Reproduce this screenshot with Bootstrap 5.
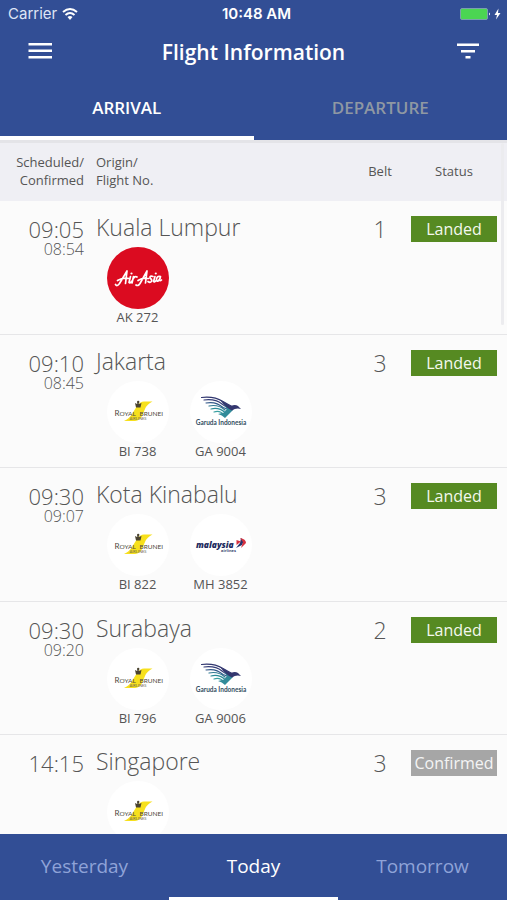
<!DOCTYPE html>
<html lang="en">
<head>
<meta charset="utf-8">
<meta name="viewport" content="width=device-width, initial-scale=1">
<title>Flight Information</title>
<link href="https://cdn.jsdelivr.net/npm/bootstrap@5.3.0/dist/css/bootstrap.min.css" rel="stylesheet">
<style>
  body { font-family: "Open Sans", "Noto Sans", sans-serif; color: #555; background: #fbfbfb; }
  .brand-bg { background: #324e95; color: #fff; }
  .phone-bar { height: 28px; font: 15px/28px Inter, "Liberation Sans", sans-serif; color: #dfe5f5; padding: 0 6px 0 8px; }
  .clock { font-weight: 600; color: #fff; padding-left: 4px; }
  .title-bar { height: 48px; padding: 0 27px; }
  .title-bar h1 { font-size: 21px; line-height: 28px; font-weight: 600; }
  .icon-btn { background: none; border: 0; padding: 0; width: 26px; height: 28px; line-height: 0; color: #fff; }
  .switcher .nav-link { width: 100%; color: #8f98a3; background: none; border: 0 solid transparent; border-bottom-width: 4px; border-radius: 0; padding: 4px 0 0; }
  .switcher .nav-link.active { color: #fff; border-color: #fff; }
  .direction .nav-link { height: 64px; font-size: 17px; line-height: 24px; font-weight: 600; }
  .days .nav-link { height: 66px; font-size: 19px; line-height: 28px; color: #8fa3d8; border-bottom-width: 3px; padding-top: 0; }
  .board { border-top: 3px solid #e4e4e8; scrollbar-width: none; }
  .board::-webkit-scrollbar { display: none; }
  .flights { table-layout: fixed; width: 100%; border-collapse: separate; border-spacing: 0; }
  .col-time { width: 96px; }
  .col-belt { width: 62px; }
  .col-status { width: 96px; }
  .flights th { height: 58px; padding: 0 0 2px; background: #efeff4; font-size: 13px; line-height: 18px; font-weight: 400; vertical-align: middle; }
  .flights td { height: 134px; padding: 15px 0 0; vertical-align: top; border-bottom: 1px solid #e6e6e8; }
  .flights tr:nth-child(even) td { height: 133px; }
  .flights .pad-time { padding-right: 12px; text-align: right; }
  .planned { font-size: 22px; line-height: 26px; font-weight: 300; }
  .belt-no { font-size: 23px; line-height: 26px; font-weight: 300; }
  .actual { font-size: 16px; line-height: 14px; font-weight: 300; }
  .city { font-size: 23px; line-height: 22px; font-weight: 300; }
  .carrier { width: 83px; font-size: 13px; line-height: 16px; padding-top: 9px; }
  .carrier svg { display: block; width: 62px; height: 62px; margin: 0 auto; }
  .flights .pad-status { padding-right: 10px; }
  .state { height: 26px; font-size: 16px; line-height: 26px; color: #f4f8ee; background: #568a22; }
  .state-wait { background: #a6a6a6; color: #f4f4f4; }
  .scroll-thumb { top: 3px; right: 3px; width: 3px; height: 182px; border-radius: 2px; background: #ececef; }
</style>
<script src="https://cdn.jsdelivr.net/npm/bootstrap@5.3.0/dist/js/bootstrap.bundle.min.js"></script>
</head>
<body>
<svg class="d-none" aria-hidden="true">
  <symbol id="airasia" viewBox="0 0 62 62">
    <circle cx="31" cy="31" r="31" fill="#db0b20"/>
    <g fill="none" stroke="#fff" stroke-linecap="round" stroke-linejoin="round" stroke-width="1.7">
      <path d="M8.500 37.500Q10 40 12.500 36.500L20 24L18.500 36.500M10.500 33.500Q16 30 22 31.500"/>
      <path d="M23.500 29.500L22 35.500Q23 36.500 25 34M26.500 29.500L25 36M26 32Q28 28.500 30 30"/>
      <path d="M29 38Q31 39.500 33 36.500L40 24L38.500 36M31 33.500Q36 30 41.500 31.500"/>
      <path d="M46 29.500Q42.500 28.500 43 31Q45.500 33 44.500 34.500Q43 36 41 34.500"/>
      <path d="M48 29.500L46.500 34.500Q47.500 35.500 49.500 33M53.500 29.500Q49.500 28.500 49.500 33Q50.500 36 53 31.500L53.500 29.500L52.500 33Q53 34.500 54.500 33"/>
    </g>
    <circle cx="24.500" cy="26.500" r="1.100" fill="#fff"/><circle cx="48.800" cy="26.500" r="1.100" fill="#fff"/>
  </symbol>
  <symbol id="brunei" viewBox="0 0 62 62">
    <circle cx="31" cy="31" r="31" fill="#fff"/>
    <path d="M45.500 20.500H37Q33 20.500 30 25L25 33Q22 38 17 40H28Q33 39.500 35 35L38 28Q40 23 45.500 20.500Z" fill="#f7e01c"/>
    <path d="M28 22L30 23L31 21L32 23L34.500 22L33.500 26.500H29Z" fill="#4b4430"/>
    <circle cx="31.200" cy="21" r="1.200" fill="#4b4430"/>
    <text x="7.500" y="34.500" font-family="Lato, sans-serif" font-size="6.500" fill="#4f4a40"><tspan font-size="8">R</tspan>OYAL</text>
    <text x="32.500" y="34.500" font-family="Lato, sans-serif" font-size="6.500" fill="#4f4a40">BRUNEI</text>
    <text x="31" y="39" text-anchor="middle" font-family="Lato, sans-serif" font-size="4" fill="#6b6555">AIRLINES</text>
  </symbol>
  <symbol id="garuda" viewBox="0 0 62 62">
    <circle cx="31" cy="31" r="31" fill="#fff"/>
    <g fill="none" stroke-width="1.200" stroke-linecap="round">
      <path d="M11.500 16.500Q24 15 33 20.500Q39 24 43 26" stroke="#30366f"/>
      <path d="M14 19Q25 17.500 32 23Q37 27 42 27" stroke="#353d77"/>
      <path d="M16 22Q26 20 33 26.500L40 29" stroke="#34598a"/>
      <path d="M19 25Q28 23 35 29" stroke="#2e7891"/>
      <path d="M21 28Q29 26 35 31.500" stroke="#2b8b98"/>
      <path d="M24 31Q30 29 34 34" stroke="#3ba0a2"/>
    </g>
    <path d="M34 24L41 27L43 29L35 37Q32 34 28 33L34 31.500L37 28Z" fill="#318b99"/>
    <path d="M30 19L41 25Q45 23 48 25L51 28Q46 26.500 42 29.500Q36 27 30 19Z" fill="#34376f"/>
    <text x="31" y="44" text-anchor="middle" font-family="Lato, sans-serif" font-size="6.500" font-weight="700" fill="#344e62">Garuda Indonesia</text>
  </symbol>
  <symbol id="malaysia" viewBox="0 0 62 62">
    <circle cx="31" cy="31" r="31" fill="#fff"/>
    <text x="6" y="34" font-family="Open Sans, sans-serif" font-size="8.500" font-weight="800" font-style="italic" fill="#1e2c60">malaysia</text>
    <text x="31" y="37.500" font-family="Open Sans, sans-serif" font-size="4" font-weight="700" fill="#40496f">airlines</text>
    <path d="M46 34L50 29L51 24L54 27L52 31Z" fill="#24356f"/>
    <path d="M50 24Q56 25 56 29L51 34L53 28Z" fill="#d5313f"/>
    <path d="M46.500 26L51 27.500L46.500 31Z" fill="#d5313f"/>
  </symbol>
</svg>

<div class="d-flex flex-column vh-100">
  <header class="brand-bg flex-shrink-0">
    <div class="phone-bar d-flex">
      <div class="col d-flex align-items-center gap-1">Carrier
        <svg width="18" height="14" viewBox="0 0 18 14" fill="none" stroke="#fff" stroke-width="2" aria-hidden="true"><path d="M2 5Q9-1 16 5M4.500 8Q9 4 13.500 8"/><path d="M6.500 10Q9 8 11.500 10L9 13Z" fill="#fff" stroke="none"/></svg>
      </div>
      <div class="clock">10:48 AM</div>
      <div class="col d-flex align-items-center justify-content-end">
        <svg width="42" height="14" viewBox="0 0 42 14" aria-hidden="true"><rect x="1.500" y="1.500" width="27" height="11" rx="1.500" fill="#4bd552" stroke="#7a9fae"/><path d="M30 5.500Q32 7 30 8.500Z" fill="#fff"/><path d="M39.500 1.500L35.500 8H38L37 12.500L41.500 6H39Z" fill="#fff"/></svg>
      </div>
    </div>
    <div class="title-bar d-flex align-items-center justify-content-between">
      <button class="icon-btn" type="button" aria-label="Menu"><svg width="26" height="28" viewBox="0 0 26 28" fill="currentColor" aria-hidden="true"><path d="M1.500 5h23.500v2.500H1.500zM1.500 11.500h23.500v2.500H1.500zM1.500 18h23.500v2.500H1.500z"/></svg></button>
      <h1 class="m-0">Flight Information</h1>
      <button class="icon-btn" type="button" aria-label="Filter"><svg width="26" height="28" viewBox="0 0 26 28" fill="currentColor" aria-hidden="true"><path d="M3 5.500h22v2.500H3zM7 12h14v2.500H7zM11.500 18h5v2.500h-5z"/></svg></button>
    </div>
    <nav class="switcher direction row g-0">
      <div class="col"><button class="nav-link active" type="button">ARRIVAL</button></div>
      <div class="col"><button class="nav-link" type="button">DEPARTURE</button></div>
    </nav>
  </header>

  <div class="position-relative flex-grow-1 overflow-hidden">
  <main class="board h-100 overflow-auto">
    <table class="flights">
      <colgroup><col class="col-time"><col><col class="col-belt"><col class="col-status"></colgroup>
      <thead>
        <tr><th class="pad-time" scope="col">Scheduled/<br>Confirmed</th><th scope="col">Origin/<br>Flight No.</th><th class="text-center" scope="col">Belt</th><th class="text-center pad-status" scope="col">Status</th></tr>
      </thead>
      <tbody>
        <tr>
          <td class="pad-time"><div class="planned">09:05</div><div class="actual">08:54</div></td>
          <td><div class="city">Kuala Lumpur</div><div class="d-flex text-center"><div class="carrier"><svg role="img" aria-label="AirAsia"><use href="#airasia"/></svg>AK 272</div></div></td>
          <td class="text-center belt-no">1</td>
          <td class="text-center pad-status"><div class="state">Landed</div></td>
        </tr>
        <tr>
          <td class="pad-time"><div class="planned">09:10</div><div class="actual">08:45</div></td>
          <td><div class="city">Jakarta</div><div class="d-flex text-center"><div class="carrier"><svg role="img" aria-label="Royal Brunei"><use href="#brunei"/></svg>BI 738</div><div class="carrier"><svg role="img" aria-label="Garuda Indonesia"><use href="#garuda"/></svg>GA 9004</div></div></td>
          <td class="text-center belt-no">3</td>
          <td class="text-center pad-status"><div class="state">Landed</div></td>
        </tr>
        <tr>
          <td class="pad-time"><div class="planned">09:30</div><div class="actual">09:07</div></td>
          <td><div class="city">Kota Kinabalu</div><div class="d-flex text-center"><div class="carrier"><svg role="img" aria-label="Royal Brunei"><use href="#brunei"/></svg>BI 822</div><div class="carrier"><svg role="img" aria-label="Malaysia Airlines"><use href="#malaysia"/></svg>MH 3852</div></div></td>
          <td class="text-center belt-no">3</td>
          <td class="text-center pad-status"><div class="state">Landed</div></td>
        </tr>
        <tr>
          <td class="pad-time"><div class="planned">09:30</div><div class="actual">09:20</div></td>
          <td><div class="city">Surabaya</div><div class="d-flex text-center"><div class="carrier"><svg role="img" aria-label="Royal Brunei"><use href="#brunei"/></svg>BI 796</div><div class="carrier"><svg role="img" aria-label="Garuda Indonesia"><use href="#garuda"/></svg>GA 9006</div></div></td>
          <td class="text-center belt-no">2</td>
          <td class="text-center pad-status"><div class="state">Landed</div></td>
        </tr>
        <tr>
          <td class="pad-time"><div class="planned">14:15</div></td>
          <td><div class="city">Singapore</div><div class="d-flex text-center"><div class="carrier"><svg role="img" aria-label="Royal Brunei"><use href="#brunei"/></svg></div></div></td>
          <td class="text-center belt-no">3</td>
          <td class="text-center pad-status"><div class="state state-wait">Confirmed</div></td>
        </tr>
      </tbody>
    </table>
  </main>
  <div class="scroll-thumb position-absolute"></div>
  </div>

  <nav class="switcher days brand-bg row g-0 flex-shrink-0">
    <div class="col"><button class="nav-link" type="button">Yesterday</button></div>
    <div class="col"><button class="nav-link active" type="button">Today</button></div>
    <div class="col"><button class="nav-link" type="button">Tomorrow</button></div>
  </nav>
</div>
</body>
</html>
